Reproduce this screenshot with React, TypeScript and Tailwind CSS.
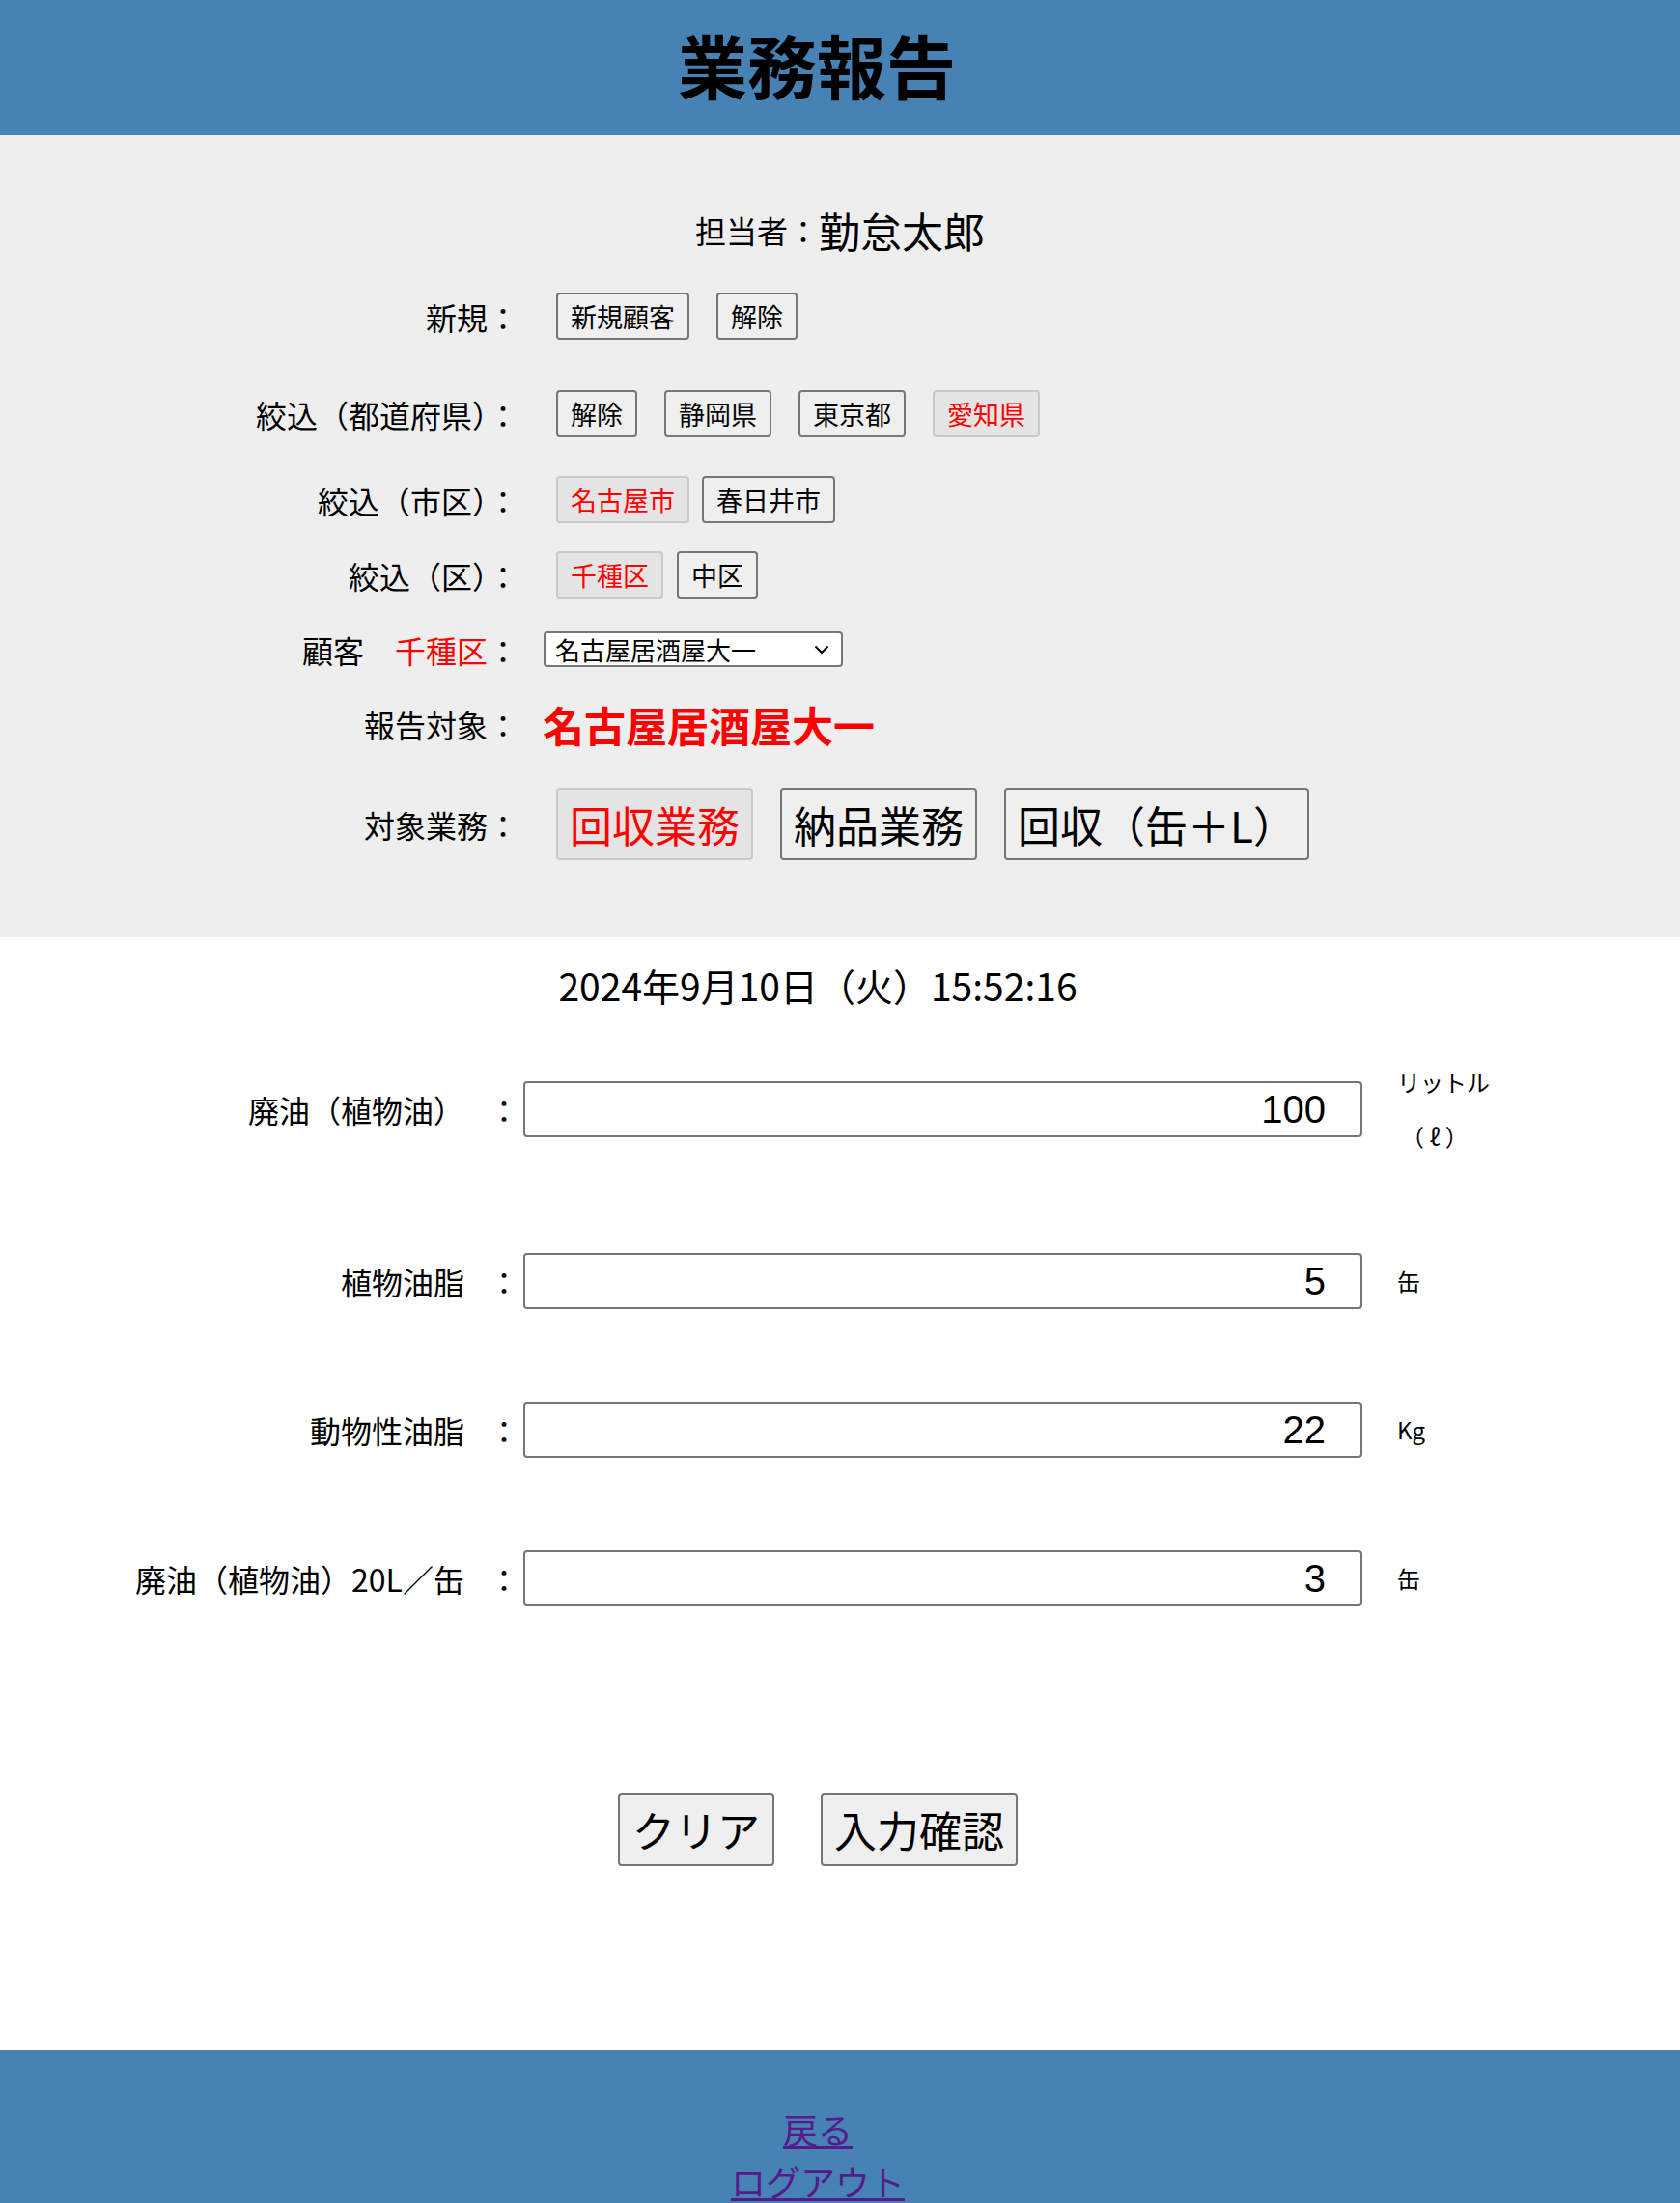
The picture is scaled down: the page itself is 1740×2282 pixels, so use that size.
import React from "react";

const font = { fontFamily: '"Noto Sans CJK JP", "Noto Sans", sans-serif' };

function SmallButton({ label, active }: { label: string; active?: boolean }) {
  return (
    <button
      className={
        active
          ? "h-[49px] rounded-[4px] border-2 border-[#c9c9c9] bg-[#e4e4e4] px-[13px] text-[27px] leading-none text-[#ff0000]"
          : "h-[49px] rounded-[4px] border-2 border-[#777777] bg-[#efefef] px-[13px] text-[27px] leading-none text-black"
      }
    >
      {label}
    </button>
  );
}

function BigButton({ label, active }: { label: string; active?: boolean }) {
  return (
    <button
      className={
        active
          ? "h-[75px] rounded-[4px] border-2 border-[#c9c9c9] bg-[#e4e4e4] px-[12px] text-[44px] leading-none text-[#ff0000]"
          : "h-[75px] rounded-[4px] border-2 border-[#777777] bg-[#efefef] px-[12px] text-[44px] leading-none text-black"
      }
    >
      {label}
    </button>
  );
}

function Row({
  label,
  children,
  className,
}: {
  label: React.ReactNode;
  children: React.ReactNode;
  className: string;
}) {
  return (
    <div className={"flex items-center " + className}>
      <div className="w-[537px] shrink-0 text-right text-[32px] leading-none">{label}</div>
      <div className="flex items-center">{children}</div>
    </div>
  );
}

const items = [
  { label: "廃油（植物油）", value: "100", unit: "liter", top: "mt-[48px]" },
  { label: "植物油脂", value: "5", unit: "缶", top: "mt-[93px]" },
  { label: "動物性油脂", value: "22", unit: "Kg", top: "mt-[96px]" },
  { label: "廃油（植物油）20L／缶", value: "3", unit: "缶", top: "mt-[96px]" },
];

export default function App() {
  return (
    <div className="w-[1740px] bg-white text-black" style={font}>
      {/* header */}
      <header className="h-[140px] bg-[#4682b4] pt-[30px]">
        <h1 className="pr-[48px] text-center text-[72px] font-bold leading-[72px]">業務報告</h1>
      </header>

      {/* selection area */}
      <section className="bg-[#eeeeee] pb-[80px] pt-[74px]">
        <div className="flex h-[48px] items-center justify-center">
          <span className="text-[32px] leading-none">担当者：</span>
          <span className="text-[43px] leading-none">勤怠太郎</span>
        </div>

        <Row label="新規：" className="mt-[41px] h-[49px]">
          <div className="ml-[39px] flex gap-[28px]">
            <SmallButton label="新規顧客" />
            <SmallButton label="解除" />
          </div>
        </Row>

        <Row label="絞込（都道府県）：" className="mt-[52px] h-[49px]">
          <div className="ml-[39px] flex gap-[28px]">
            <SmallButton label="解除" />
            <SmallButton label="静岡県" />
            <SmallButton label="東京都" />
            <SmallButton label="愛知県" active />
          </div>
        </Row>

        <Row label="絞込（市区）：" className="mt-[40px] h-[49px]">
          <div className="ml-[39px] flex gap-[13px]">
            <SmallButton label="名古屋市" active />
            <SmallButton label="春日井市" />
          </div>
        </Row>

        <Row label="絞込（区）：" className="mt-[29px] h-[49px]">
          <div className="ml-[39px] flex gap-[14px]">
            <SmallButton label="千種区" active />
            <SmallButton label="中区" />
          </div>
        </Row>

        <Row
          label={
            <>
              顧客　<span className="text-[#ff0000]">千種区</span>：
            </>
          }
          className="mt-[34px] h-[37px]"
        >
          <div className="ml-[26px] flex h-[37px] w-[310px] items-center justify-between rounded-[4px] border-2 border-[#767676] bg-white pl-[10px] pr-[12px]">
            <span className="text-[26px] leading-none">名古屋居酒屋大一</span>
            <svg width="16" height="10" viewBox="0 0 16 10" fill="none">
              <path d="M1.5 1.5 L8 8 L14.5 1.5" stroke="#000" strokeWidth="2" />
            </svg>
          </div>
        </Row>

        <Row label="報告対象：" className="mt-[34px] h-[50px]">
          <span className="ml-[25px] text-[43px] font-bold leading-none text-[#ff0000]">
            名古屋居酒屋大一
          </span>
        </Row>

        <Row label="対象業務：" className="mt-[41px] h-[75px]">
          <div className="ml-[39px] flex gap-[28px]">
            <BigButton label="回収業務" active />
            <BigButton label="納品業務" />
            <BigButton label="回収（缶＋L）" />
          </div>
        </Row>
      </section>

      {/* date */}
      <div className="mt-[24px] flex h-[50px] items-center justify-center pr-[46px] text-[39px] leading-none">
        2024年9月10日（火）15:52:16
      </div>

      {/* quantities */}
      {items.map((it) => (
        <div
          key={it.label}
          className={
            "flex items-center " + it.top + (it.unit === "liter" ? " h-[112px]" : " h-[58px]")
          }
        >
          <div className="w-[481px] shrink-0 text-right text-[32px] leading-none">{it.label}</div>
          <div className="ml-[25px] w-[32px] shrink-0 text-center text-[32px] leading-none">：</div>
          <div
            className="ml-[4px] flex h-[58px] w-[869px] shrink-0 items-center justify-end rounded-[4px] border-2 border-[#767676] bg-white pr-[36px] text-[40px] leading-none"
            style={{ fontFamily: '"Liberation Sans", Arial, sans-serif' }}
          >
            {it.value}
          </div>
          <div className="ml-[36px] w-[110px] text-[24px]">
            {it.unit === "liter" ? (
              <div className="leading-[56px]">
                <div>リットル</div>
                <div className="pl-[4px]">（ ℓ ）</div>
              </div>
            ) : (
              <span className="leading-none">{it.unit}</span>
            )}
          </div>
        </div>
      ))}

      {/* action buttons */}
      <div className="mt-[193px] flex justify-center gap-[48px] pr-[46px]">
        <button className="h-[76px] rounded-[4px] border-2 border-[#767676] bg-[#efefef] px-[13px] text-[44px] leading-none">
          クリア
        </button>
        <button className="h-[76px] rounded-[4px] border-2 border-[#767676] bg-[#efefef] px-[12px] text-[44px] leading-none">
          入力確認
        </button>
      </div>

      {/* footer */}
      <footer className="mt-[191px] bg-[#4682b4] pb-[60px] pt-[54px] text-center text-[36px] leading-[54px]">
        <div className="pr-[46px]">
          <a href="#" className="text-[#551a8b] underline">
            戻る
          </a>
        </div>
        <div className="pr-[46px]">
          <a href="#" className="text-[#551a8b] underline">
            ログアウト
          </a>
        </div>
      </footer>
    </div>
  );
}
